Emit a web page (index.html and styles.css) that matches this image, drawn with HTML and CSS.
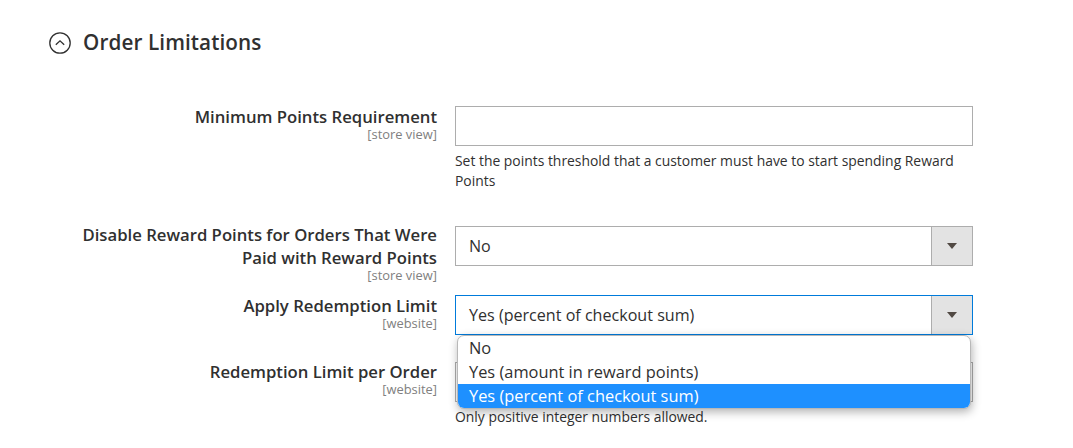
FILE: index.html
```html
<!DOCTYPE html>
<html>
<head>
<meta charset="utf-8">
<link rel="stylesheet" href="styles.css">
</head>
<body>
<div class="page">
  <div class="section-title">
    <svg class="toggle" width="22" height="22" viewBox="0 0 22 22">
      <circle cx="11" cy="11" r="10.2" fill="none" stroke="#303030" stroke-width="1.3"/>
      <path d="M6.8 12.8 L11 8.8 L15.2 12.8" fill="none" stroke="#303030" stroke-width="1.3"/>
    </svg>
    <span class="title-text">Order Limitations</span>
  </div>

  <div class="fields">
    <div class="field field-1">
      <div class="label">
        <div class="label-text">Minimum Points Requirement</div>
        <div class="scope">[store view]</div>
      </div>
      <div class="control">
        <div class="input"></div>
        <div class="note">Set the points threshold that a customer must have to start spending Reward Points</div>
      </div>
    </div>

    <div class="field field-2">
      <div class="label">
        <div class="label-text">Disable Reward Points for Orders That Were Paid with Reward Points</div>
        <div class="scope">[store view]</div>
      </div>
      <div class="control">
        <div class="select">
          <span class="select-value">No</span>
          <span class="select-arrow"><span class="tri"></span></span>
        </div>
      </div>
    </div>

    <div class="field field-3">
      <div class="label">
        <div class="label-text">Apply Redemption Limit</div>
        <div class="scope">[website]</div>
      </div>
      <div class="control control-rel">
        <div class="select select-focus">
          <span class="select-value">Yes (percent of checkout sum)</span>
          <span class="select-arrow"><span class="tri"></span></span>
        </div>
        <div class="dropdown">
          <div class="option">No</div>
          <div class="option">Yes (amount in reward points)</div>
          <div class="option option-active">Yes (percent of checkout sum)</div>
        </div>
      </div>
    </div>

    <div class="field field-4">
      <div class="label">
        <div class="label-text">Redemption Limit per Order</div>
        <div class="scope">[website]</div>
      </div>
      <div class="control">
        <div class="input"></div>
        <div class="note">Only positive integer numbers allowed.</div>
      </div>
    </div>
  </div>
</div>
</body>
</html>
```

FILE: styles.css
```css
html, body {
  margin: 0;
  padding: 0;
  background: #ffffff;
}
body {
  font-family: "Open Sans", "Liberation Sans", sans-serif;
  color: #303030;
  width: 1073px;
  height: 448px;
  overflow: hidden;
}
.page {
  padding-top: 30px;
}
.section-title {
  display: flex;
  align-items: center;
  padding-left: 49px;
  height: 26px;
}
.toggle {
  display: block;
  margin-right: 12px;
}
.title-text {
  font-size: 20.7px;
  font-weight: 600;
  letter-spacing: 0.1px;
  color: #303030;
  position: relative;
  top: -1px;
}
.fields {
  padding-top: 50px;
  padding-left: 60px;
}
.field {
  display: grid;
  grid-template-columns: 377px 518px;
  column-gap: 18px;
}
.field-1 { margin-bottom: 35px; }
.field-2 { margin-bottom: 14px; }
.field-3 { margin-bottom: 27px; }
.label {
  text-align: right;
}
.label-text {
  font-size: 16.7px;
  font-weight: 600;
  line-height: 23px;
  color: #303030;
}
.field-1 .label { margin-top: -1px; }
.field-2 .label { margin-top: -3px; }
.field-3 .label { margin-top: -1px; }
.field-4 .label { margin-top: -2px; }
.scope {
  font-size: 12.9px;
  line-height: 11px;
  margin-top: 1px;
  color: #808080;
}
.control {
  min-width: 0;
}
.control-rel {
  position: relative;
}
.input {
  height: 38px;
  border: 1px solid #adadad;
  background: #fff;
}
.note {
  font-size: 13.9px;
  line-height: 20px;
  color: #303030;
  margin-top: 5px;
}
.select {
  height: 38px;
  border: 1px solid #adadad;
  background: #fff;
  display: flex;
  align-items: center;
}
.select-focus {
  border-color: #007bdb;
}
.select-value {
  flex: 1;
  padding-left: 13px;
  font-size: 16.1px;
  color: #303030;
}
.select-arrow {
  width: 40px;
  height: 100%;
  background: #e3e3e3;
  border-left: 1px solid #adadad;
  display: flex;
  align-items: center;
  justify-content: center;
}
.tri {
  width: 0;
  height: 0;
  border-left: 5px solid transparent;
  border-right: 5px solid transparent;
  border-top: 6px solid #514943;
}
.dropdown {
  position: absolute;
  left: 2px;
  top: 40px;
  width: 512px;
  border: 1px solid #b8b8b8;
  border-radius: 7px;
  background: #fff;
  box-shadow: 1px 3px 10px rgba(0, 0, 0, 0.3);
  overflow: hidden;
  z-index: 5;
}
.option {
  height: 24px;
  line-height: 24px;
  padding-left: 11px;
  font-size: 16.4px;
  color: #303030;
}
.option-active {
  background: #1e90ff;
  color: #ffffff;
}
```
